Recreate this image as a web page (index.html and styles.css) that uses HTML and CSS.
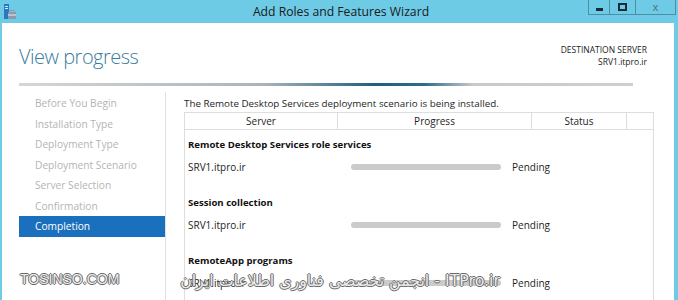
FILE: index.html
```html
<!DOCTYPE html>
<html lang="en">
<head>
    <meta charset="UTF-8">
    <title>Add Roles and Features Wizard</title>
    <link rel="stylesheet" href="styles.css">
</head>
<body>

    <div class="titlebar">
        <div class="app-icon">
            <svg width="12" height="16" viewBox="0 0 12 16">
                <rect x="0" y="0" width="5" height="15" fill="#2b78c2"/>
                <rect x="1" y="2" width="3" height="1" fill="#d9ecfa"/>
                <rect x="1" y="4" width="3" height="1" fill="#d9ecfa"/>
                <rect x="4" y="8" width="8" height="7" fill="#8a9aa8"/>
                <rect x="6" y="6.5" width="4" height="2" fill="none" stroke="#8a9aa8" stroke-width="1"/>
                <rect x="4" y="10.5" width="8" height="1" fill="#e4edf3"/>
            </svg>
        </div>
        <div class="title">Add Roles and Features Wizard</div>
        <div class="controls">
            <span class="ctl ctl-min"><i></i></span>
            <span class="ctl ctl-max"><i></i></span>
            <span class="ctl ctl-close">x</span>
        </div>
    </div>

    <div class="window">
        <div class="header">
            <h1>View progress</h1>
            <div class="dest">
                <div>DESTINATION SERVER</div>
                <div>SRV1.itpro.ir</div>
            </div>
        </div>
        <div class="rule"></div>

        <div class="main">
            <ul class="nav">
                <li>Before You Begin</li>
                <li>Installation Type</li>
                <li>Deployment Type</li>
                <li>Deployment Scenario</li>
                <li>Server Selection</li>
                <li>Confirmation</li>
                <li class="active">Completion</li>
            </ul>

            <div class="content">
                <p class="intro">The Remote Desktop Services deployment scenario is being installed.</p>
                <div class="grid">
                    <div class="grid-head">
                        <span>Server</span>
                        <span>Progress</span>
                        <span>Status</span>
                        <span></span>
                    </div>
                    <div class="grid-body">
                        <div class="group">
                            <div class="group-title">Remote Desktop Services role services</div>
                            <div class="row">
                                <span class="server">SRV1.itpro.ir</span>
                                <span class="bar"></span>
                                <span class="status">Pending</span>
                            </div>
                        </div>
                        <div class="group">
                            <div class="group-title">Session collection</div>
                            <div class="row">
                                <span class="server">SRV1.itpro.ir</span>
                                <span class="bar"></span>
                                <span class="status">Pending</span>
                            </div>
                        </div>
                        <div class="group">
                            <div class="group-title">RemoteApp programs</div>
                            <div class="row">
                                <span class="server">SRV1.itpro.ir</span>
                                <span class="bar"></span>
                                <span class="status">Pending</span>
                            </div>
                        </div>
                    </div>
                </div>
            </div>
        </div>
    </div>

    <!-- video watermarks over the picture -->
    <div class="mark mark-left">TOSINSO.COM</div>
    <div class="mark mark-right" dir="rtl">ITPro.ir - انجمن تخصصی فناوری اطلاعات ایران</div>

</body>
</html>
```

FILE: styles.css
```css
body {
    margin: 0;
    width: 678px;
    height: 300px;
    overflow: hidden;
    background: #6dcbe6;
    font-family: 'Open Sans', 'Noto Sans', sans-serif;
    color: #1e1e1e;
    position: relative;
}
.titlebar {
    height: 23px;
    display: grid;
    grid-template-columns: 1fr auto 1fr;
    align-items: start;
}
.app-icon {
    padding: 3px 0 0 4px;
    height: 16px;
}
.title {
    font-size: 12.2px;
    line-height: 23px;
    color: #1a1a1a;
    padding-left: 4px;
}
.controls {
    justify-self: end;
    display: flex;
    height: 15px;
    margin-right: 2px;
    border: 1px solid #4d8da6;
    border-top: none;
    box-sizing: border-box;
}
.ctl {
    display: flex;
    align-items: center;
    justify-content: center;
    height: 14px;
    border-right: 1px solid #4d8da6;
}
.ctl-min {
    width: 20px;
}
.ctl-min i {
    display: block;
    width: 7px;
    height: 3px;
    margin-top: 5px;
    background: #1b2a33;
}
.ctl-max {
    width: 25px;
}
.ctl-max i {
    display: block;
    width: 5px;
    height: 4px;
    border: 2px solid #1b2a33;
}
.ctl-close {
    width: 39px;
    border-right: none;
    font-family: 'Liberation Sans', sans-serif;
    font-size: 11px;
    color: #55707c;
    line-height: 14px;
}
.window {
    height: 277px;
    margin: 0 4px 0 2px;
    background: #fff;
    display: flex;
    flex-direction: column;
    overflow: hidden;
}
.header {
    flex-shrink: 0;
    display: flex;
    justify-content: space-between;
    padding: 19px 27px 0 17px;
    height: 41px;
}
.header h1 {
    margin: 0;
    font-weight: 300;
    font-size: 20px;
    letter-spacing: -0.5px;
    line-height: 30px;
    color: #3b7ca0;
}
.dest {
    text-align: right;
    font-size: 8.5px;
    line-height: 12px;
    padding-top: 2px;
    color: #222;
}
.rule {
    flex-shrink: 0;
    height: 3px;
    width: 614px;
    margin-left: 17px;
    background: linear-gradient(to right, #d6d6d6 0%, #a8b4bb 40%, #1d5f7e 58%, #2b6d8a 66%, #c9c9c9 74%, #cfcfcf 100%);
}
.main {
    flex: 1;
    min-height: 0;
    display: flex;
    padding-top: 6px;
}
.nav {
    list-style: none;
    margin: 0 0 0 17px;
    padding: 1px 0 0 0;
    width: 146px;
    border-right: 1px solid #e1e1e1;
}
.nav li {
    height: 20.5px;
    line-height: 20.5px;
    padding-left: 16px;
    font-size: 10.2px;
    color: #b4b4b4;
}
.nav li.active {
    background: #1b70bd;
    color: #fff;
}
.content {
    padding-left: 18px;
    width: 470px;
}
.intro {
    margin: 4px 0 0 0;
    font-size: 9.8px;
    line-height: 16px;
    color: #1e1e1e;
}
.grid {
    border: 1px solid #dedede;
    border-bottom: none;
    height: 200px;
    background: #fff;
}
.grid-head {
    display: grid;
    grid-template-columns: 153px 194px 95px 1fr;
    height: 16px;
    border-bottom: 1px solid #dedede;
}
.grid-head span {
    border-right: 1px solid #dedede;
    text-align: center;
    font-size: 10px;
    line-height: 16px;
}
.grid-head span:last-child {
    border-right: none;
}
.grid-body {
    padding-top: 4px;
}
.group {
    margin-bottom: 14px;
}
.group-title {
    height: 22px;
    line-height: 22px;
    padding-left: 3px;
    font-size: 9.6px;
    font-weight: 700;
    color: #111;
}
.row {
    display: flex;
    align-items: center;
    height: 22px;
    padding-left: 3px;
    font-size: 10px;
}
.server {
    width: 163px;
}
.bar {
    width: 150px;
    height: 6px;
    border-radius: 3px;
    background: #cbcbcb;
    margin-right: 11px;
}
.mark {
    position: absolute;
    color: #ececec;
    text-shadow: -1px 0 #6a6a6a, 1px 0 #6a6a6a, 0 -1px #6a6a6a, 0 1px #6a6a6a;
    white-space: nowrap;
}
.mark-left {
    left: 20px;
    top: 271px;
    font-family: 'Liberation Sans', sans-serif;
    font-size: 14px;
}
.mark-right {
    right: 178px;
    top: 271px;
    font-family: 'DejaVu Sans', sans-serif;
    font-size: 15.8px;
}
```
